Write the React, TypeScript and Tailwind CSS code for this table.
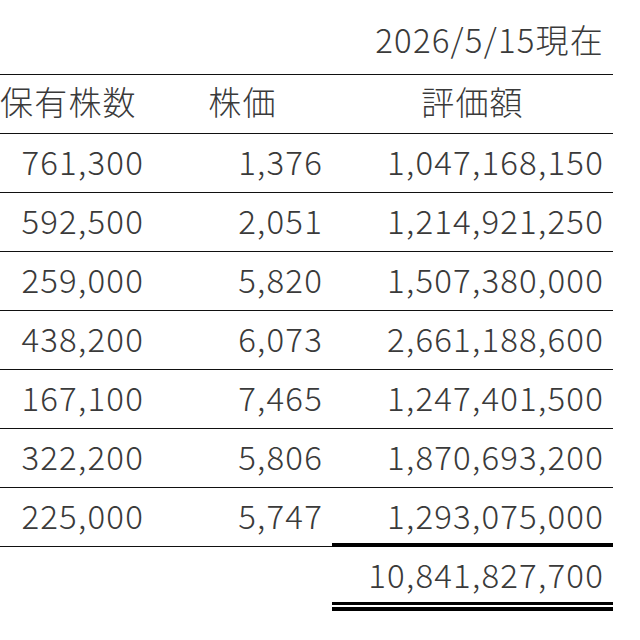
import React from "react";

const rows: [string, string, string][] = [
  ["761,300", "1,376", "1,047,168,150"],
  ["592,500", "2,051", "1,214,921,250"],
  ["259,000", "5,820", "1,507,380,000"],
  ["438,200", "6,073", "2,661,188,600"],
  ["167,100", "7,465", "1,247,401,500"],
  ["322,200", "5,806", "1,870,693,200"],
  ["225,000", "5,747", "1,293,075,000"],
];

export default function App() {
  return (
    <div
      className="w-[640px] h-[640px] bg-white text-[#3a3a3a] overflow-hidden font-light"
      style={{ fontFamily: '"Noto Sans CJK JP", "Noto Sans", sans-serif' }}
    >
      <div className="w-[613px] text-[33px] leading-none tracking-[1.2px]">
        <div className="h-[75px] flex items-center justify-end pr-[9px] pt-[5px] border-b border-[#111]">
          2026/5/15現在
        </div>
        <div className="h-[59px] flex items-center border-b border-[#111] pb-[6px]">
          <div className="w-[153px] text-left">保有株数</div>
          <div className="w-[179px] text-center">株価</div>
          <div className="w-[281px] text-center">評価額</div>
        </div>
        {rows.map((r, i) => (
          <div key={i} className="h-[59px] flex items-center border-b border-[#111] pb-[3px]">
            <div className="w-[153px] text-right pr-[9px]">{r[0]}</div>
            <div className="w-[179px] text-right pr-[9px]">{r[1]}</div>
            <div className="w-[281px] text-right pr-[9px]">{r[2]}</div>
          </div>
        ))}
        <div className="flex -mt-[4px]">
          <div className="w-[332px]" />
          <div className="w-[281px] flex flex-col">
            <div className="h-[4px] bg-black" />
            <div className="h-[55px] flex items-center justify-end pr-[9px]">
              10,841,827,700
            </div>
            <div className="h-[3px] bg-black" />
            <div className="h-[2px]" />
            <div className="h-[4px] bg-black" />
          </div>
        </div>
      </div>
    </div>
  );
}
